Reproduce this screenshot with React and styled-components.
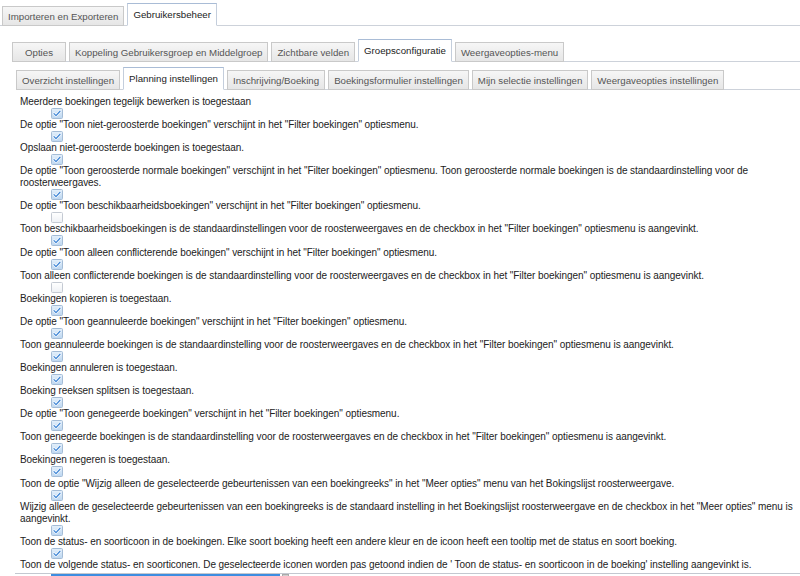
import React from 'react';
import styled, { createGlobalStyle, css } from 'styled-components';

const GlobalStyle = createGlobalStyle`
  body {
    margin: 0;
    background: #ffffff;
    font-family: "Liberation Sans", Arial, sans-serif;
    font-size: 10px;
    color: #222;
    overflow: hidden;
  }
`

const Page = styled.div`
  padding-top: 3px;
  width: 800px;
`

const TabBar = styled.div`
  display: flex;
  align-items: flex-end;
  border-bottom: 1px solid #cdd2da;
  padding-left: ${p => p.pad || 0}px;
`

const Tab = styled.div`
  box-sizing: border-box;
  height: ${p => p.h}px;
  min-width: ${p => p.minw || 0}px;
  margin-right: 3px;
  margin-bottom: -1px;
  padding: 0 5px;
  display: flex;
  align-items: center;
  justify-content: center;
  white-space: nowrap;
  font-size: 9.7px;
  border: 1px solid #c9c9c9;
  background: linear-gradient(#f6f6f6, #e6e6e6);
  color: #555;

  ${p => p.active && css`
    height: ${p.h + 3}px;
    background: #ffffff;
    border-color: #c4cedc;
    border-top-color: #a9bcd6;
    border-bottom-color: #ffffff;
    color: #222;
  `}
`

const Panel = styled.div`
  padding-left: ${p => p.pad || 0}px;
  padding-top: ${p => p.top || 0}px;
`

const Settings = styled.div`
  padding: 6px 0 0 4px;
  font-size: 10px;
  letter-spacing: -0.06px;
`

const Item = styled.div`
  line-height: 12px;
`

const BoxRow = styled.div`
  height: 11.1px;
  padding-left: 31px;
`

const BoxSvg = styled.svg`
  display: block;
`

const ListBox = styled.div`
  margin-top: 2px;
  margin-left: -5px;
  border-top: 1px solid #c3c8d0;
  padding-left: 36px;
  display: flex;
  align-items: flex-start;
`

const ListRow = styled.div`
  width: 229px;
  height: 14px;
  background: #3d8de0;
`

const ScrollThumb = styled.div`
  width: 5px;
  height: 5px;
  margin-left: 2px;
  background: #cfcfcf;
  border: 1px solid #aaa;
`

const Check = ({ on }) => (
  <BoxSvg width="12" height="11" viewBox="0 0 12 11">
    <defs>
      <linearGradient id={on ? 'gOn' : 'gOff'} x1="0" y1="0" x2="0" y2="1">
        <stop offset="0" stopColor={on ? '#e4f0fb' : '#ffffff'} />
        <stop offset="1" stopColor={on ? '#bcd6f0' : '#eef1f5'} />
      </linearGradient>
    </defs>
    <rect x="0.5" y="0.5" width="11" height="10" rx="1" fill={`url(#${on ? 'gOn' : 'gOff'})`} stroke={on ? '#a4bcd6' : '#c4cad3'} />
    {on && <path d="M3 5.6 L5 7.6 L9 3.2" fill="none" stroke="#ffffff" strokeWidth="2.6" strokeLinecap="round" strokeLinejoin="round" />}
    {on && <path d="M3 5.6 L5 7.6 L9 3.2" fill="none" stroke="#3f86d6" strokeWidth="1.3" strokeLinecap="round" strokeLinejoin="round" />}
  </BoxSvg>
)

const settings = [
  ['Meerdere boekingen tegelijk bewerken is toegestaan', true],
  ['De optie "Toon niet-geroosterde boekingen" verschijnt in het "Filter boekingen" optiesmenu.', true],
  ['Opslaan niet-geroosterde boekingen is toegestaan.', true],
  ['De optie "Toon geroosterde normale boekingen" verschijnt in het "Filter boekingen" optiesmenu. Toon geroosterde normale boekingen is de standaardinstelling voor de roosterweergaves.', true],
  ['De optie "Toon beschikbaarheidsboekingen" verschijnt in het "Filter boekingen" optiesmenu.', false],
  ['Toon beschikbaarheidsboekingen is de standaardinstellingen voor de roosterweergaves en de checkbox in het "Filter boekingen" optiesmenu is aangevinkt.', true],
  ['De optie "Toon alleen conflicterende boekingen" verschijnt in het "Filter boekingen" optiesmenu.', true],
  ['Toon alleen conflicterende boekingen is de standaardinstelling voor de roosterweergaves en de checkbox in het "Filter boekingen" optiesmenu is aangevinkt.', false],
  ['Boekingen kopieren is toegestaan.', true],
  ['De optie "Toon geannuleerde boekingen" verschijnt in het "Filter boekingen" optiesmenu.', true],
  ['Toon geannuleerde boekingen is de standaardinstelling voor de roosterweergaves en de checkbox in het "Filter boekingen" optiesmenu is aangevinkt.', true],
  ['Boekingen annuleren is toegestaan.', true],
  ['Boeking reeksen splitsen is toegestaan.', true],
  ['De optie "Toon genegeerde boekingen" verschijnt in het "Filter boekingen" optiesmenu.', true],
  ['Toon genegeerde boekingen is de standaardinstelling voor de roosterweergaves en de checkbox in het "Filter boekingen" optiesmenu is aangevinkt.', true],
  ['Boekingen negeren is toegestaan.', true],
  ['Toon de optie "Wijzig alleen de geselecteerde gebeurtenissen van een boekingreeks" in het "Meer opties" menu van het Bokingslijst roosterweergave.', true],
  ['Wijzig alleen de geselecteerde gebeurtenissen van een boekingreeks is de standaard instelling in het Boekingslijst roosterweergave en de checkbox in het "Meer opties" menu is aangevinkt.', true],
  ['Toon de status- en soorticoon in de boekingen. Elke soort boeking heeft een andere kleur en de icoon heeft een tooltip met de status en soort boeking.', true],
]

class App extends React.Component {
  render() {
    return (
      <Page>
        <GlobalStyle />
        <TabBar pad={2}>
          <Tab h={20}>Importeren en Exporteren</Tab>
          <Tab h={20} active>Gebruikersbeheer</Tab>
        </TabBar>

        <Panel pad={12} top={13}>
          <TabBar>
            <Tab h={20} minw={54}>Opties</Tab>
            <Tab h={20}>Koppeling Gebruikersgroep en Middelgroep</Tab>
            <Tab h={20}>Zichtbare velden</Tab>
            <Tab h={20} active>Groepsconfiguratie</Tab>
            <Tab h={20}>Weergaveopties-menu</Tab>
          </TabBar>

          <Panel pad={4} top={5}>
            <TabBar>
              <Tab h={20}>Overzicht instellingen</Tab>
              <Tab h={20} active>Planning instellingen</Tab>
              <Tab h={20}>Inschrijving/Boeking</Tab>
              <Tab h={20}>Boekingsformulier instellingen</Tab>
              <Tab h={20}>Mijn selectie instellingen</Tab>
              <Tab h={20}>Weergaveopties instellingen</Tab>
            </TabBar>

            <Settings>
              {settings.map(([text, on], i) => (
                <div key={i}>
                  <Item>{text}</Item>
                  <BoxRow><Check on={on} /></BoxRow>
                </div>
              ))}
              <Item>Toon de volgende status- en soorticonen. De geselecteerde iconen worden pas getoond indien de ' Toon de status- en soorticoon in de boeking' instelling aangevinkt is.</Item>
              <ListBox>
                <ListRow />
                <ScrollThumb />
              </ListBox>
            </Settings>
          </Panel>
        </Panel>
      </Page>
    );
  }
}

export default App;
